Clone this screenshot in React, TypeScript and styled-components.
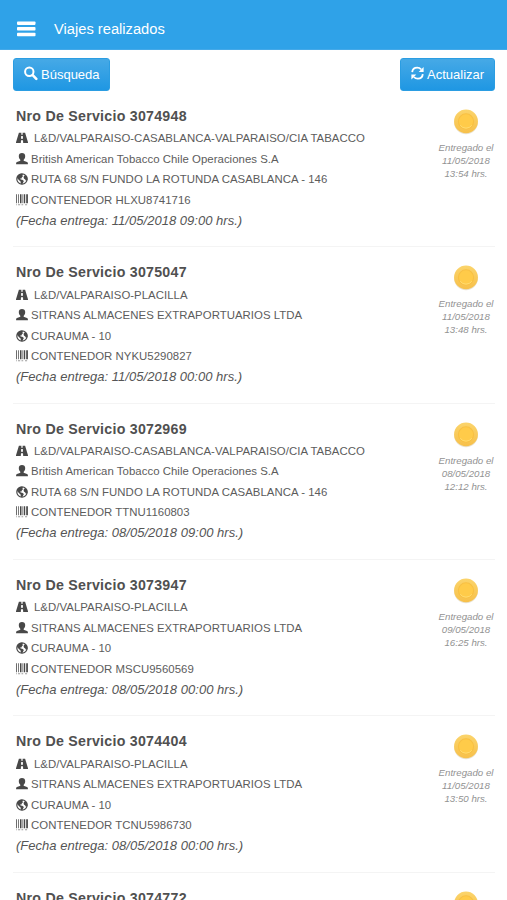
import React from "react";
import styled, { createGlobalStyle } from "styled-components";

const GlobalStyle = createGlobalStyle`
  * { box-sizing: border-box; }
  html, body { margin: 0; height: 900px; overflow: hidden; background: #fff; }
  body { font-family: "Liberation Sans", Arial, sans-serif; color: #555; }
  svg { display: block; flex: none; }
`;

const Page = styled.div`
  height: 900px;
  overflow: hidden;
`;

const Header = styled.header`
  height: 50px;
  padding: 9px 0 0 17px;
  display: flex;
  align-items: center;
  gap: 18px;
  background: #2fa2e8;
  border-bottom: 1px solid #45a9e8;
`;

const HeaderTitle = styled.h1`
  margin: 0;
  color: #fff;
  font-size: 14.7px;
  line-height: 20px;
  font-weight: 400;
`;

const Toolbar = styled.div`
  height: 41px;
  padding: 8px 12px 0 13px;
  display: flex;
  justify-content: space-between;
`;

const Button = styled.button<{ $width: number }>`
  width: ${(p) => p.$width}px;
  height: 33px;
  padding: 0 0 1px 10px;
  display: flex;
  align-items: center;
  gap: 3px;
  border: 1px solid #2b9de2;
  border-radius: 3px;
  background: linear-gradient(#46a9e6, #1f97e3);
  color: #fff;
  font: 13px "Liberation Sans", Arial, sans-serif;
  white-space: nowrap;

  svg { margin-top: -2px; }
`;

const Trip = styled.article`
  height: 156.35px;
  margin: 0 12px 0 13px;
  padding: 15px 0 0 3px;
  display: flex;
  justify-content: space-between;
`;

const TripList = styled.main`
  ${Trip} + ${Trip} {
    box-shadow: 0 -1px 0 #f4f4f4;
  }
`;

const Info = styled.div`
  white-space: nowrap;
`;

const TripTitle = styled.h2`
  margin: 0;
  font-size: 14.2px;
  letter-spacing: 0.26px;
  line-height: 20px;
  font-weight: 700;
  color: #505050;
`;

const Detail = styled.div<{ $gap?: number }>`
  height: 20.4px;
  display: flex;
  align-items: center;
  gap: ${(p) => p.$gap ?? 3}px;
  font-size: 11.4px;
  letter-spacing: 0.035px;
  color: #5c5c5c;

  &:first-of-type { margin-top: 2.2px; }
  svg { color: #484848; }
`;

const DueDate = styled.div`
  padding-top: 0.8px;
  font-size: 13px;
  letter-spacing: 0.025px;
  line-height: 20px;
  font-style: italic;
  color: #555;
`;

const Status = styled.div`
  width: 58px;
  padding-top: 2px;
  display: flex;
  flex-direction: column;
  align-items: center;
`;

const Delivered = styled.div`
  margin-top: 6px;
  text-align: center;
  font-size: 9.7px;
  line-height: 13px;
  font-style: italic;
  color: #929292;
  white-space: nowrap;
`;

const MenuIcon = () => (
  <svg width="19" height="16" viewBox="0 0 19 16" fill="#fff">
    <rect x="0" y="0.5" width="18.5" height="3.4" rx="0.8" />
    <rect x="0" y="6.1" width="18.5" height="3.4" rx="0.8" />
    <rect x="0" y="11.8" width="18.5" height="3.4" rx="0.8" />
  </svg>
);

const SearchIcon = () => (
  <svg width="14" height="15" viewBox="0 0 14 15" fill="none" stroke="#fff">
    <circle cx="5.3" cy="5.8" r="4.2" strokeWidth="2" />
    <path d="M8.7 9.2l3.6 3.6" strokeWidth="2.6" strokeLinecap="round" />
  </svg>
);

const RefreshIcon = () => (
  <svg width="13" height="15" viewBox="0 0 13 15" fill="none" stroke="#fff" strokeWidth="1.8">
    <path d="M1.2 6.2C1.5 3.3 3.700 1.700 6.200 1.700c1.600 0 2.900.6 3.900 1.700" />
    <path d="M12.6.9v5H7.7z" fill="#fff" stroke="none" />
    <path d="M11.8 8.200c-.3 2.900-2.500 4.500-5 4.500-1.600 0-2.900-.6-3.900-1.700" />
    <path d="M.4 13.500v-5h4.900z" fill="#fff" stroke="none" />
  </svg>
);

const RoadIcon = () => (
  <svg width="12" height="12" viewBox="0 0 12 12" fill="currentColor">
    <path d="M2.900.7h2.500l-.1 2h1.400l-.1-2h2.500L12.200 11H7.200L7 8.200H5L4.800 11H-.2zM5.200 3.900L5 6.800h2l-.2-2.900z" />
  </svg>
);

const UserIcon = () => (
  <svg width="12" height="12" viewBox="0 0 12 12" fill="currentColor">
    <path d="M6 0c2 0 3.200 1.200 3.200 3.100 0 1.600-.6 2.900-1.500 3.600v.7c0 .3.200.5.6.7l2.700 1c.6.300.9.6.9 1.200v.9H.1v-.9c0-.6.300-.9.9-1.200l2.700-1c.4-.2.6-.4.6-.7v-.7c-.9-.7-1.500-2-1.500-3.600C2.800 1.200 4 0 6 0z" />
  </svg>
);

const GlobeIcon = () => (
  <svg width="12" height="12" viewBox="0 0 12 12">
    <circle cx="6" cy="6" r="5.2" fill="#fff" stroke="currentColor" strokeWidth="1.200" />
    <path
      fill="currentColor"
      d="M.9 4.200C1.500 2.200 3.200.7 5.500.7l1.600.6-.9 1 1 .8-1.300 1.200-.4 1.100-1.400.2.600.900 1.600.300 1.600 1.100-.8 1.600-1 2-1.300-.9-.2-2-1.500-1.400L1.500 5.600zM8 3l1.300-1 1.900 2.300.2 2.400-1.300 1.400-.9-1.700-1.300-.8-.3-1.500z"
    />
  </svg>
);

const BarcodeIcon = () => (
  <svg width="12" height="12" viewBox="0 0 12 12" fill="currentColor">
    <path opacity=".8" d="M0 .3h1v9H0zM2 .3h.9v9H2z" />
    <path d="M4 .3h1.500v9H4zM6.500.3h.8v9h-.8zM8 .3h1.200v9H8zM10.200.3h1.700v9h-1.700z" />
    <path opacity=".55" d="M0 10.300h.8v1H0zM2 10.300h2.200v1H2zM5.500 10.300h1.700v1H5.500zM9 10.300h2.100v1H9z" />
  </svg>
);

const CoinIcon = () => (
  <svg width="26" height="27" viewBox="0 0 26 27">
    <defs>
      <linearGradient id="coin" x1="0" y1="0" x2="0" y2="1">
        <stop offset="0" stopColor="#fbd46b" />
        <stop offset="1" stopColor="#f7c04a" />
      </linearGradient>
    </defs>
    <circle cx="13" cy="14.300" r="11.900" fill="#c9b78a" opacity=".4" />
    <circle cx="13" cy="13.400" r="11.900" fill="url(#coin)" />
    <circle cx="13" cy="13.400" r="7.600" fill="#ffcb49" stroke="#f8c043" strokeWidth="1.100" />
    <path d="M7.200 17.300a7.300 7.300 0 0 0 11.600 0" fill="none" stroke="#ffe07b" strokeWidth="0.800" />
  </svg>
);

type TripData = {
  id: string;
  route: string;
  client: string;
  place: string;
  container: string;
  due: string;
  date: string;
  time: string;
};

const longRoute = {
  route: "L&D/VALPARAISO-CASABLANCA-VALPARAISO/CIA TABACCO",
  client: "British American Tobacco Chile Operaciones S.A",
  place: "RUTA 68 S/N FUNDO LA ROTUNDA CASABLANCA - 146",
};

const shortRoute = {
  route: "L&D/VALPARAISO-PLACILLA",
  client: "SITRANS ALMACENES EXTRAPORTUARIOS LTDA",
  place: "CURAUMA - 10",
};

const trips: TripData[] = [
  { id: "3074948", ...longRoute, container: "HLXU8741716", due: "11/05/2018 09:00", date: "11/05/2018", time: "13:54" },
  { id: "3075047", ...shortRoute, container: "NYKU5290827", due: "11/05/2018 00:00", date: "11/05/2018", time: "13:48" },
  { id: "3072969", ...longRoute, container: "TTNU1160803", due: "08/05/2018 09:00", date: "08/05/2018", time: "12:12" },
  { id: "3073947", ...shortRoute, container: "MSCU9560569", due: "08/05/2018 00:00", date: "09/05/2018", time: "16:25" },
  { id: "3074404", ...shortRoute, container: "TCNU5986730", due: "08/05/2018 00:00", date: "11/05/2018", time: "13:50" },
];

export default function App() {
  return (
    <Page>
      <GlobalStyle />
      <Header>
        <MenuIcon />
        <HeaderTitle>Viajes realizados</HeaderTitle>
      </Header>
      <Toolbar>
        <Button $width={97}><SearchIcon />Búsqueda</Button>
        <Button $width={95}><RefreshIcon />Actualizar</Button>
      </Toolbar>
      <TripList>
        {trips.map((t) => (
          <Trip key={t.id}>
            <Info>
              <TripTitle>Nro De Servicio {t.id}</TripTitle>
              <Detail $gap={6}><RoadIcon />{t.route}</Detail>
              <Detail><UserIcon />{t.client}</Detail>
              <Detail><GlobeIcon />{t.place}</Detail>
              <Detail><BarcodeIcon />CONTENEDOR {t.container}</Detail>
              <DueDate>(Fecha entrega: {t.due} hrs.)</DueDate>
            </Info>
            <Status>
              <CoinIcon />
              <Delivered>Entregado el<br />{t.date}<br />{t.time} hrs.</Delivered>
            </Status>
          </Trip>
        ))}
        <Trip>
          <Info><TripTitle>Nro De Servicio 3074772</TripTitle></Info>
          <Status><CoinIcon /></Status>
        </Trip>
      </TripList>
    </Page>
  );
}
